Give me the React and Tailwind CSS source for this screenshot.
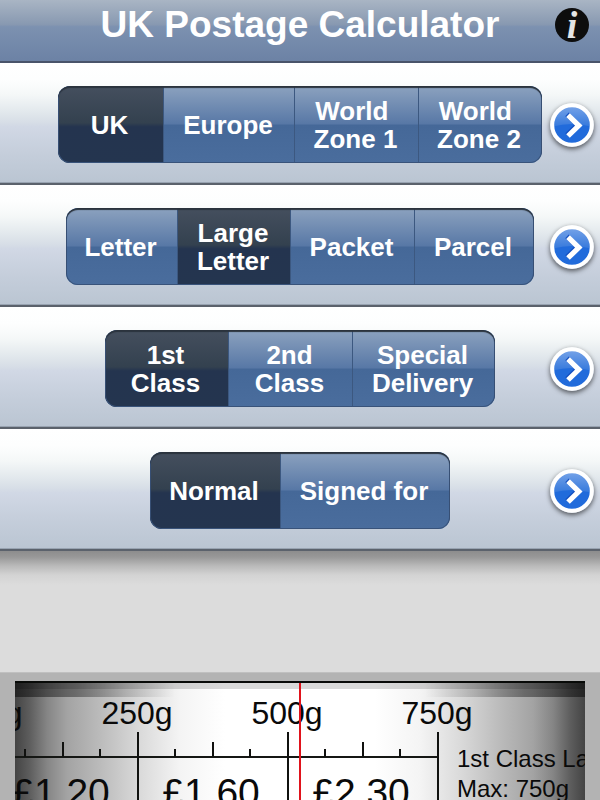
import { useState } from "react";

const groups = [
  {
    name: "Destination",
    options: [
      { label: "UK", width: "w-[106px]" },
      { label: "Europe", width: "w-[131px]" },
      { label: "World\u00a0\nZone 1", width: "w-[124px]" },
      { label: "World\u00a0\nZone 2", width: "w-[123px]" },
    ],
    initial: 0,
  },
  {
    name: "Format",
    options: [
      { label: "Letter", width: "w-[112px]" },
      { label: "Large\nLetter", width: "w-[113px]" },
      { label: "Packet", width: "w-[124px]" },
      { label: "Parcel", width: "w-[119px]" },
    ],
    initial: 1,
  },
  {
    name: "Service",
    options: [
      { label: "1st\nClass", width: "w-[124px]" },
      { label: "2nd\nClass", width: "w-[124px]" },
      { label: "Special\nDelivery", width: "w-[142px]" },
    ],
    initial: 0,
  },
  {
    name: "Delivery",
    options: [
      { label: "Normal", width: "w-[131px]" },
      { label: "Signed for", width: "w-[169px]" },
    ],
    initial: 0,
  },
];

function Chevron() {
  return (
    <svg viewBox="0 0 44 44" className="size-11" aria-hidden="true">
      <defs>
        <linearGradient id="disc" x1="0" y1="0" x2="0" y2="1">
          <stop offset="0" stopColor="#76a3e8" />
          <stop offset="0.55" stopColor="#3478dc" />
          <stop offset="1" stopColor="#3478dc" />
        </linearGradient>
      </defs>
      <circle cx="22" cy="22" r="19" fill="url(#disc)" />
      <path d="M3 23.5 Q22 18.5 41 23.5 A19 19 0 0 1 3 23.5 Z" fill="#216bdb" />
      <circle cx="22" cy="22" r="19.75" fill="none" stroke="#fff" strokeWidth="3.9" />
      <path d="M17 11.4 L27.6 21.8 L17 32" fill="none" stroke="#1450c0" strokeWidth="5" />
      <path d="M18 12.2 L28.8 22.6 L18 33" fill="none" stroke="#fff" strokeWidth="5.2" />
    </svg>
  );
}

function SegmentRow({ group }) {
  const [selected, setSelected] = useState(group.initial);
  return (
    <section className="grid h-[122px] shrink-0 grid-cols-[1fr_auto_1fr] items-center border-b-2 border-[#5b626c] bg-[linear-gradient(to_bottom,#ffffff_0%,#fdfefe_14%,#f5f8f8_26%,#e3e9ed_40%,#d6dde6_50%,#d1d8e5_53%,#c5cedb_75%,#bac5d2_100%)] pt-[3px] shadow-[inset_0_-1px_0_#98a3b1]">
      <span />
      <div
        role="group"
        aria-label={group.name}
        className="relative flex h-[77px] overflow-hidden rounded-xl bg-[#486b9a]"
      >
        {group.options.map((option, i) => (
          <button
            key={option.label}
            type="button"
            aria-pressed={i === selected}
            onClick={() => setSelected(i)}
            className={`${option.width} whitespace-pre-line border-r border-[#3c5880] pr-[2px] text-center text-[26px] leading-7 font-bold text-white last:border-r-0 ${
              i === selected
                ? "bg-[linear-gradient(to_bottom,#454f5e_0%,#33414f_48%,#24344f_53%,#24354f_100%)]"
                : "bg-[linear-gradient(to_bottom,#8ca2bf_0%,#5878a6_49%,#456898_51%,#4a6d9d_100%)]"
            }`}
          >
            {option.label}
          </button>
        ))}
        <span className="pointer-events-none absolute inset-0 rounded-xl shadow-[inset_0_2px_1px_#2b333d,inset_0_0_0_1px_#39537a]" />
      </div>
      <button
        type="button"
        aria-label={`${group.name} details`}
        className="mr-[6px] justify-self-end rounded-full shadow-[0_2px_5px_rgba(0,0,0,0.6)]"
      >
        <Chevron />
      </button>
    </section>
  );
}

const ticks = Array.from({ length: 13 }, (_, i) => i);

function Scale() {
  return (
    <svg
      viewBox="0 0 900 160"
      className="h-[160px] w-[900px] shrink-0 font-['Liberation_Sans',Arial,sans-serif]"
      role="img"
      aria-label="Weight and price scale"
    >
      <rect x="0" y="73" width="589" height="2" fill="#151714" />
      {ticks.map((i) => {
        const top = i % 4 === 0 ? 49 : i % 2 === 0 ? 59 : 66;
        const height = i % 4 === 0 ? 111 : 74 - top;
        return <rect key={i} x={Math.floor(137 + i * 37.5)} y={top} width="2" height={height} fill="#10110f" />;
      })}
      <g fontSize="32" textAnchor="middle" fill="#0a0a0a">
        <text x="137" y="41">100g</text>
        <text x="287" y="41">250g</text>
        <text x="437" y="41">500g</text>
        <text x="587" y="41">750g</text>
      </g>
      <g fontSize="39" textAnchor="middle" fill="#0a0a0a">
        <text x="211" y="123">£1.20</text>
        <text x="361" y="123">£1.60</text>
        <text x="511" y="123">£2.30</text>
      </g>
      <g fontSize="24" fill="#0a0a0a">
        <text x="607" y="84">1st Class Large Letter</text>
        <text x="607" y="114">Max: 750g</text>
      </g>
    </svg>
  );
}

export default function App() {
  return (
    <main className="flex h-screen flex-col overflow-hidden bg-[#dcdcdc] font-['Liberation_Sans',Arial,sans-serif]">
      <header className="grid h-[63px] shrink-0 grid-cols-[1fr_auto_1fr] items-start border-b-2 border-[#49546a] bg-[linear-gradient(to_bottom,#a9b5c4_0%,#8899b1_40%,#7c91b0_44%,#6c82a5_100%)]">
        <span />
        <h1 className="pt-[2px] text-[37px] leading-[46px] font-bold text-white">UK Postage Calculator</h1>
        <button
          type="button"
          aria-label="Information"
          className="mt-2 mr-[11px] size-[34px] justify-self-end rounded-full bg-[#0d0d0d] font-['Liberation_Serif',serif] text-[38px] leading-[32px] font-bold text-[#e4e4e4] italic"
        >
          i
        </button>
      </header>

      {groups.map((group) => (
        <SegmentRow key={group.name} group={group} />
      ))}

      <div className="h-[121px] shrink-0 bg-[linear-gradient(to_bottom,#8d8d8d_0px,#989898_6px,#bababa_15px,#d3d3d3_24px,#dcdcdc_34px)]" />

      <section className="flex min-h-0 flex-1 flex-col border-t border-[#c0c0c0] bg-[#b3b3b3] px-[15px] pt-2">
        <div className="relative flex min-h-0 flex-1 items-start justify-center overflow-hidden border-t-2 border-[#080a08] bg-[linear-gradient(to_right,#444_0px,#5e5e5e_15px,#858585_32px,#a3a3a3_52px,#bbb_85px,#dadada_125px,#f4f4f4_165px,#fff_210px,#fff_calc(100%-210px),#f4f4f4_calc(100%-165px),#dadada_calc(100%-125px),#bbb_calc(100%-85px),#a3a3a3_calc(100%-52px),#858585_calc(100%-32px),#5e5e5e_calc(100%-15px),#444_100%)]">
          <div className="absolute inset-x-0 top-0 h-[14px] bg-[linear-gradient(to_right,rgba(0,0,0,0.48)_0px,rgba(0,0,0,0.38)_60px,rgba(0,0,0,0.16)_110px,transparent_160px,transparent_calc(100%-160px),rgba(0,0,0,0.16)_calc(100%-110px),rgba(0,0,0,0.38)_calc(100%-60px),rgba(0,0,0,0.48)_100%)]" />
          <div className="absolute inset-x-0 top-0 h-[6px] bg-black/15" />
          <Scale />
          <div className="absolute -top-px bottom-0 left-1/2 -ml-px w-[2px] bg-[#e0131b]" />
        </div>
      </section>
    </main>
  );
}
